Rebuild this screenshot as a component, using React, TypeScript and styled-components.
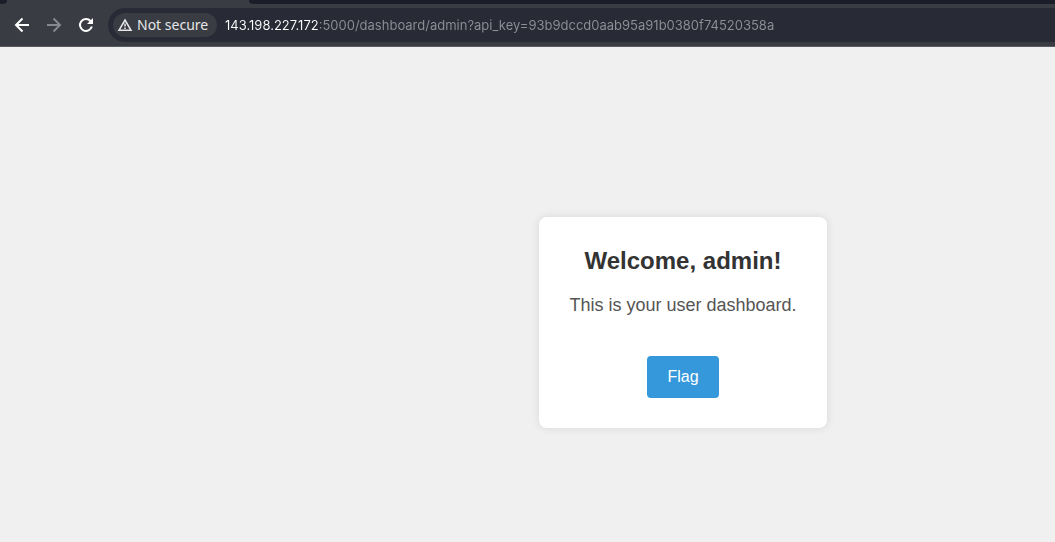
import React from "react";
import styled, { createGlobalStyle } from "styled-components";

const GlobalStyle = createGlobalStyle`
  * { box-sizing: border-box; }
  body { margin: 0; background: #f0f0f0; }
`;

const Window = styled.div`
  display: flex;
  flex-direction: column;
  min-height: 100vh;
`;

const TabStrip = styled.div`
  display: flex;
  height: 4px;
  background: #3a3c43;
`;

const StripGap = styled.div<{ $fill?: boolean }>`
  flex: ${(p) => (p.$fill ? "1" : "0 0 7px")};
  background: #1b1e28;
  border-radius: ${(p) => (p.$fill ? "0 0 0 4px" : "0 0 4px 0")};
`;

const ActiveTab = styled.div`
  width: 242px;
`;

const Toolbar = styled.div`
  display: flex;
  align-items: center;
  height: 43px;
  padding-left: 12px;
  background: #3a3c43;
  border-bottom: 1px solid #5a5b60;
`;

const NavButton = styled.button<{ $muted?: boolean }>`
  display: flex;
  width: 20px;
  height: 20px;
  margin-right: 12px;
  padding: 0;
  border: 0;
  background: none;
  color: ${(p) => (p.$muted ? "#87888c" : "#ffffff")};
`;

const AddressBar = styled.div`
  display: flex;
  flex: 1;
  align-items: center;
  gap: 8px;
  height: 34px;
  padding-left: 5px;
  border-radius: 17px 0 0 17px;
  background: #282a35;
`;

const SecurityChip = styled.button`
  display: flex;
  flex: none;
  align-items: center;
  gap: 4px;
  width: 104px;
  height: 24px;
  padding: 0 0 0 4px;
  border: 0;
  border-radius: 12px;
  background: #3a3c43;
  color: #e6e6e8;
  font: 14px/20px "Noto Sans", sans-serif;
  white-space: nowrap;
`;

/* The host part of the address is bright, the path behind it is dimmed. */
const AddressInput = styled.input`
  flex: 1;
  min-width: 0;
  height: 24px;
  padding: 0;
  border: 0;
  outline: 0;
  color: #8e9096;
  font: 13px/20px Inter, sans-serif;
  background: linear-gradient(90deg, #ffffff 94px, #8e9096 94px);
  background-clip: text;
  -webkit-background-clip: text;
  -webkit-text-fill-color: transparent;
`;

const Page = styled.main`
  display: flex;
  flex: 1;
  justify-content: center;
  align-items: flex-start;
  padding: 170px 0 0 311px;
  background: #f0f0f0;
  font-family: "Liberation Sans", Arial, sans-serif;
`;

const Card = styled.section`
  display: flex;
  flex-direction: column;
  align-items: center;
  padding: 30px;
  border-radius: 8px;
  background: #ffffff;
  box-shadow: 0 0 10px rgba(0, 0, 0, 0.1);
`;

const Title = styled.h1`
  margin: 0 0 20px;
  color: #333333;
  font-size: 24px;
  line-height: 27px;
`;

const Message = styled.p`
  margin: 0 0 40px;
  color: #555555;
  font-size: 18px;
  line-height: 22px;
`;

const FlagLink = styled.a`
  padding: 12px 20px;
  border-radius: 4px;
  background: #3498db;
  color: #ffffff;
  font-size: 16px;
  line-height: 18px;
  text-decoration: none;
`;

const Glyph = ({ d, size = 20 }: { d: string; size?: number }) => (
  <svg width={size} height={size} viewBox="0 0 20 20" fill="none" stroke="currentColor" strokeWidth="2" aria-hidden="true">
    <path d={d} />
  </svg>
);

export default function App() {
  return (
    <Window>
      <GlobalStyle />
      <TabStrip>
        <StripGap />
        <ActiveTab />
        <StripGap $fill />
      </TabStrip>
      <Toolbar>
        <NavButton aria-label="Back">
          <Glyph d="M17 10H4.5M10.5 3.5 4 10l6.500 6.500" />
        </NavButton>
        <NavButton aria-label="Forward" $muted>
          <Glyph d="M3 10h12.500M9.500 3.500 16 10l-6.500 6.500" />
        </NavButton>
        <NavButton aria-label="Reload">
          <svg width="20" height="20" viewBox="0 0 20 20" fill="none" stroke="currentColor" strokeWidth="2" aria-hidden="true">
            <path d="M15.800 11.500A6 6 0 1 1 14.500 6L16 7.500" />
            <path d="M17 3v6h-6z" fill="currentColor" stroke="none" />
          </svg>
        </NavButton>
        <AddressBar>
          <SecurityChip>
            <svg width="16" height="16" viewBox="0 0 16 16" fill="none" stroke="currentColor" strokeWidth="1.500" aria-hidden="true">
              <path d="M8 3 14 13.250H2z" />
              <path d="M8 6.500v3M8 10.500v1.500" />
            </svg>
            Not secure
          </SecurityChip>
          <AddressInput
            aria-label="Address"
            spellCheck={false}
            defaultValue="143.198.227.172:5000/dashboard/admin?api_key=93b9dccd0aab95a91b0380f74520358a"
          />
        </AddressBar>
      </Toolbar>
      <Page>
        <Card>
          <Title>Welcome, admin!</Title>
          <Message>This is your user dashboard.</Message>
          <FlagLink href="#flag">Flag</FlagLink>
        </Card>
      </Page>
    </Window>
  );
}
